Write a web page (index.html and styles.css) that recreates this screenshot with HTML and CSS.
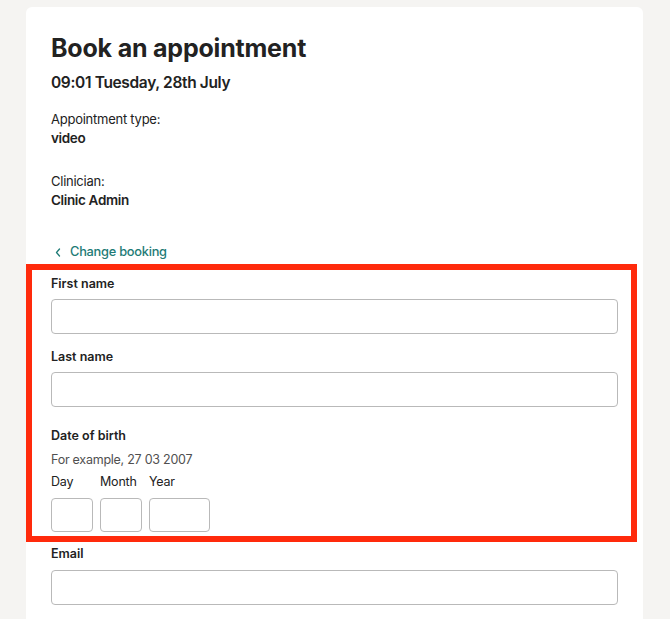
FILE: index.html
```html
<!DOCTYPE html>
<html lang="en">
<head>
<meta charset="utf-8">
<title>Book an appointment</title>
<link rel="stylesheet" href="styles.css">
</head>
<body>
<div class="page">
  <main class="card">
    <h1 class="title">Book an appointment</h1>
    <p class="when">09:01 Tuesday, 28th July</p>
    <div class="detail">
      <span class="detail-label">Appointment type:</span>
      <span class="detail-value">video</span>
    </div>
    <div class="detail detail-gap">
      <span class="detail-label">Clinician:</span>
      <span class="detail-value">Clinic Admin</span>
    </div>
    <a class="back" href="#">
      <svg class="chev" width="6" height="9" viewBox="0 0 6 9" aria-hidden="true"><path d="M4.5 1 L1.5 4.5 L4.5 8" fill="none" stroke="currentColor" stroke-width="1.3" stroke-linecap="round" stroke-linejoin="round"/></svg>
      <span>Change booking</span>
    </a>
    <form class="form">
      <div class="field">
        <label class="label">First name</label>
        <input class="input" type="text">
      </div>
      <div class="field">
        <label class="label">Last name</label>
        <input class="input" type="text">
      </div>
      <div class="field field-dob">
        <span class="label">Date of birth</span>
        <span class="hint">For example, 27 03 2007</span>
        <div class="dob">
          <div class="dob-part">
            <span class="dob-label">Day</span>
            <input class="input dob-box dob-short" type="text">
          </div>
          <div class="dob-part">
            <span class="dob-label">Month</span>
            <input class="input dob-box dob-short" type="text">
          </div>
          <div class="dob-part">
            <span class="dob-label">Year</span>
            <input class="input dob-box dob-long" type="text">
          </div>
        </div>
      </div>
      <div class="field field-email">
        <label class="label">Email</label>
        <input class="input" type="text">
      </div>
    </form>
    <div class="highlight" aria-hidden="true"></div>
  </main>
</div>
</body>
</html>
```

FILE: styles.css
```css
* { box-sizing: border-box; }
html, body { margin: 0; padding: 0; }
body {
  background: #f5f4f2;
  font-family: Inter, "Noto Sans", sans-serif;
  color: #222222;
  height: 619px;
  overflow: hidden;
}
.page {
  padding: 7px 27px 0 26px;
}
.card {
  position: relative;
  background: #ffffff;
  border-radius: 6px 6px 0 0;
  padding: 26px 25px 40px 25px;
  min-height: 640px;
}
.title {
  margin: 0;
  font-size: 25px;
  line-height: 30px;
  font-weight: 700;
  letter-spacing: -0.2px;
}
.when {
  margin: 9px 0 0 0;
  font-size: 15.5px;
  line-height: 22px;
  font-weight: 600;
  letter-spacing: -0.35px;
}
.detail {
  display: flex;
  flex-direction: column;
  margin-top: 16px;
  font-size: 13px;
  line-height: 19px;
  letter-spacing: -0.25px;
}
.detail-gap { margin-top: 24px; }
.detail-value { font-weight: 600; font-size: 13.5px; letter-spacing: -0.35px; }
.back {
  display: flex;
  align-items: center;
  gap: 9px;
  margin-top: 32px;
  padding-left: 4px;
  color: #1e7b76;
  text-decoration: none;
  font-size: 12.8px;
  line-height: 20px;
  font-weight: 500;
  letter-spacing: -0.25px;
}
.form {
  display: flex;
  flex-direction: column;
  margin-top: 12px;
}
.field {
  display: flex;
  flex-direction: column;
  gap: 6px;
}
.field + .field { margin-top: 13px; }
.field-dob { margin-top: 19px !important; gap: 0; }
.field-email { margin-top: 12px !important; gap: 7px; }
.label {
  padding-top: 1px;
  font-size: 12.5px;
  line-height: 18px;
  font-weight: 600;
}
.input {
  display: block;
  width: 100%;
  height: 35px;
  border: 1px solid #b9b9b9;
  border-radius: 4px;
  background: #ffffff;
  margin: 0;
  padding: 0 8px;
  font: inherit;
}
.hint {
  margin-top: 6px;
  font-size: 12.5px;
  line-height: 18px;
  color: #505050;
  letter-spacing: -0.25px;
}
.dob {
  display: flex;
  gap: 7px;
  margin-top: 4px;
}
.dob-part {
  display: flex;
  flex-direction: column;
  gap: 7px;
}
.dob-label {
  font-size: 12.5px;
  line-height: 18px;
  letter-spacing: -0.2px;
}
.dob-box { height: 34px; }
.dob-short { width: 42px; }
.dob-long { width: 61px; }
.highlight {
  position: absolute;
  left: 0;
  top: 257px;
  width: 611px;
  height: 278px;
  border: 6px solid #ff2a0c;
  pointer-events: none;
}
```
